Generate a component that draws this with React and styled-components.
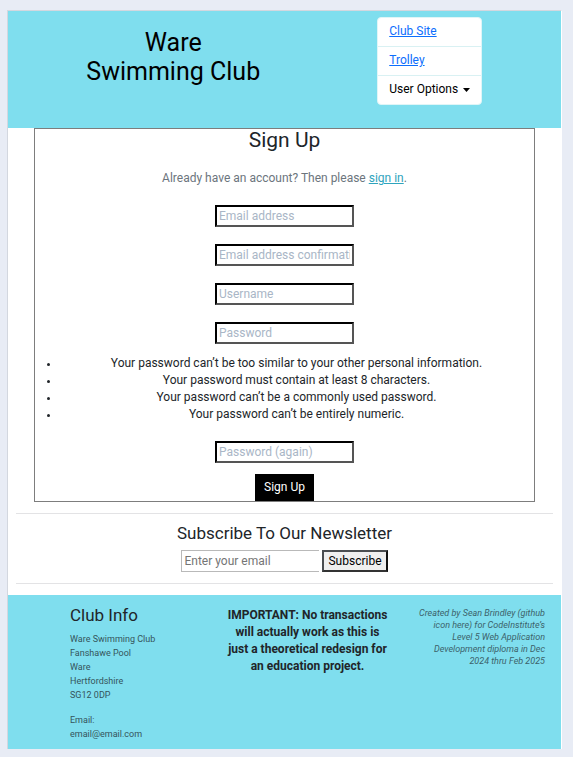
import React from "react";
import styled, { createGlobalStyle } from "styled-components";

const GlobalStyle = createGlobalStyle`
  *, *::before, *::after { box-sizing: border-box; }
  body {
    margin: 0;
    min-height: 100vh;
    background: #e8ecf5;
    color: #212529;
    font-family: Roboto, "Liberation Sans", sans-serif;
    font-size: 12px;
    line-height: 17px;
  }
  h1, h2, h3, p, ul, address { margin: 0; padding: 0; font-weight: 400; }
  input, button { font: inherit; border-radius: 0; }
`;

const Page = styled.div`
  margin: 10px 11px 8px 7px;
  background: #fff;
  border: 1px solid #d3d7df;
  border-right-color: #fff;
  border-bottom: 0;
`;

const Header = styled.header`
  display: grid;
  grid-template-columns: 1fr 1fr;
  justify-items: center;
  align-items: start;
  min-height: 117px;
  padding: 6px 3px 0 37px;
  background: #7fdeee;
`;

const SiteTitle = styled.h1`
  padding-top: 11px;
  color: #000;
  font-size: 25px;
  line-height: 29px;
  text-align: center;
`;

const NavList = styled.ul`
  list-style: none;
  min-width: 105px;
  background: #fff;
  border: 1px solid #dff5f7;
  border-radius: 4px;
`;

const NavItem = styled.li`
  padding: 5px 11px 6px;
  & + & { border-top: 1px solid #d9f1f3; }
`;

const NavLink = styled.a`
  color: #0d6efd;
`;

const MenuButton = styled.button`
  display: flex;
  align-items: center;
  gap: 5px;
  padding: 0;
  border: 0;
  background: none;
  color: #000;
  white-space: nowrap;
`;

const SignUpForm = styled.form`
  display: flex;
  flex-direction: column;
  align-items: center;
  margin: 0 26px;
  border: 1px solid #7d7d7d;
  text-align: center;
`;

const FormTitle = styled.h2`
  font-size: 21px;
  line-height: 22px;
`;

const Intro = styled.p`
  margin: 19px 0 18px;
  color: #6c757d;
`;

const SignInLink = styled.a`
  color: #2fa4bd;
`;

const Fields = styled.div`
  display: grid;
  gap: 17px;
`;

const TextField = styled.input`
  width: 139px;
  height: 22px;
  padding: 0 2px;
  border: 2px solid;
  border-color: #000 #555 #555 #000;
  background: #fff;
  color: #212529;
  &::placeholder { color: #a9b6c6; opacity: 1; }
`;

const Rules = styled.ul`
  align-self: stretch;
  margin: 11px 0 18px;
  padding-left: 24px;
  line-height: 17px;
  li::marker { font-size: 9px; }
`;

const SignUpButton = styled.button`
  margin-top: 11px;
  padding: 5px 9px;
  border: 0;
  background: #000;
  color: #fff;
`;

const Newsletter = styled.section`
  margin: 11px 8px;
  padding: 9px 0 11px;
  border: solid #e3e3e5;
  border-width: 1px 0;
  text-align: center;
`;

const NewsletterTitle = styled.h3`
  margin-bottom: 7px;
  font-size: 17px;
  line-height: 20px;
`;

const SubscribeForm = styled.form`
  display: flex;
  justify-content: center;
  gap: 3px;
`;

const EmailField = styled.input`
  width: 138px;
  height: 22px;
  padding: 0 2px;
  border: 1px solid #b9b9b9;
  border-right: 0;
  background: #fff;
  color: #212529;
  &::placeholder { color: #757575; opacity: 1; }
`;

const SubscribeButton = styled.button`
  height: 22px;
  padding: 0 4px;
  border: 2px solid;
  border-color: #4a4d50 #111 #333 #4a4d50;
  background: #efefef;
  color: #000;
  line-height: 17px;
`;

const Footer = styled.footer`
  display: grid;
  grid-template-columns: 155fr 165fr 155fr;
  min-height: 154px;
  padding: 12px 16px 8px 62px;
  background: #7fdeee;
`;

const FooterTitle = styled.h3`
  margin-bottom: 8px;
  font-size: 17px;
  line-height: 17px;
`;

const Address = styled.address`
  color: #35545b;
  font-size: 9px;
  font-style: normal;
  line-height: 14px;
  & + & { margin-top: 11px; }
`;

const Notice = styled.p`
  font-weight: 700;
  text-align: center;
`;

const Credit = styled.p`
  color: #3c626a;
  font-size: 9px;
  font-style: italic;
  line-height: 12px;
  text-align: right;
`;

const Caret = () => (
  <svg width="7" height="4" viewBox="0 0 7 4" aria-hidden="true">
    <path d="M0 0h7L3.5 4z" fill="currentColor" />
  </svg>
);

const firstFields = [
  ["email", "Email address"],
  ["email", "Email address confirmation"],
  ["text", "Username"],
  ["password", "Password"],
];

const rules = [
  "Your password can’t be too similar to your other personal information.",
  "Your password must contain at least 8 characters.",
  "Your password can’t be a commonly used password.",
  "Your password can’t be entirely numeric.",
];

const stop = (event) => event.preventDefault();

export default function App() {
  return (
    <>
      <GlobalStyle />
      <Page>
        <Header>
          <SiteTitle>Ware<br />Swimming Club</SiteTitle>
          <nav>
            <NavList>
              <NavItem><NavLink href="#club">Club Site</NavLink></NavItem>
              <NavItem><NavLink href="#trolley">Trolley</NavLink></NavItem>
              <NavItem>
                <MenuButton type="button" aria-haspopup="true">User Options <Caret /></MenuButton>
              </NavItem>
            </NavList>
          </nav>
        </Header>
        <main>
          <SignUpForm onSubmit={stop}>
            <FormTitle>Sign Up</FormTitle>
            <Intro>
              Already have an account? Then please <SignInLink href="#signin">sign in</SignInLink>.
            </Intro>
            <Fields>
              {firstFields.map(([type, label]) => (
                <TextField key={label} type={type} placeholder={label} aria-label={label} />
              ))}
            </Fields>
            <Rules>
              {rules.map((rule) => <li key={rule}>{rule}</li>)}
            </Rules>
            <TextField type="password" placeholder="Password (again)" aria-label="Password (again)" />
            <SignUpButton type="submit">Sign Up</SignUpButton>
          </SignUpForm>
          <Newsletter>
            <NewsletterTitle>Subscribe To Our Newsletter</NewsletterTitle>
            <SubscribeForm onSubmit={stop}>
              <EmailField type="email" placeholder="Enter your email" aria-label="Enter your email" />
              <SubscribeButton type="submit">Subscribe</SubscribeButton>
            </SubscribeForm>
          </Newsletter>
        </main>
        <Footer>
          <section>
            <FooterTitle>Club Info</FooterTitle>
            <Address>
              Ware Swimming Club<br />Fanshawe Pool<br />Ware<br />Hertfordshire<br />SG12 0DP
            </Address>
            <Address>Email:<br />email@email.com</Address>
          </section>
          <Notice>
            IMPORTANT: No transactions<br />will actually work as this is<br />just a theoretical redesign for<br />an education project.
          </Notice>
          <Credit>
            Created by Sean Brindley (github<br />icon here) for CodeInstitute’s<br />Level 5 Web Application<br />Development diploma in Dec<br />2024 thru Feb 2025
          </Credit>
        </Footer>
      </Page>
    </>
  );
}
